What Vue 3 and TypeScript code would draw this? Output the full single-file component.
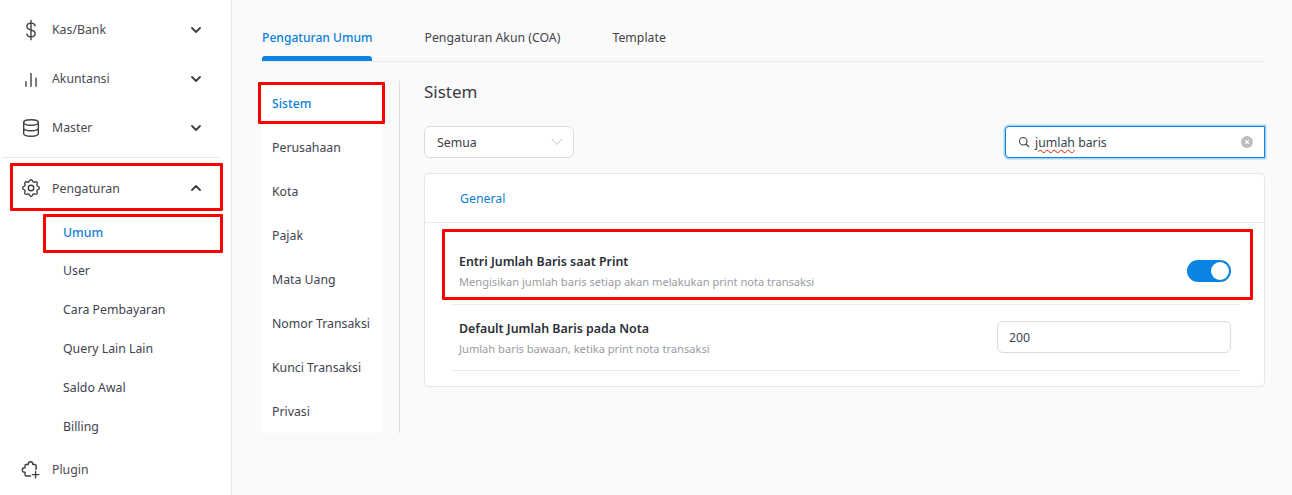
<script setup lang="ts">
const subItems: string[] = ['Umum', 'User', 'Cara Pembayaran', 'Query Lain Lain', 'Saldo Awal', 'Billing']
const menuItems: string[] = ['Sistem', 'Perusahaan', 'Kota', 'Pajak', 'Mata Uang', 'Nomor Transaksi', 'Kunci Transaksi', 'Privasi']
const tabs: string[] = ['Pengaturan Umum', 'Pengaturan Akun (COA)', 'Template']
</script>

<template>
  <div class="page">
    <aside class="sidebar">
      <div class="nav-row">
        <svg class="nav-icon" viewBox="0 0 24 24"><path d="M16.500 7.500C16 5.500 14.500 4.500 12 4.500 9.200 4.500 7.500 6 7.500 8.200 7.500 10.500 9.200 11.400 12 12c2.800 .6 4.500 1.500 4.500 3.800 0 2.200-1.700 3.700-4.500 3.700-2.500 0-4-1-4.500-3M12 1.500v21"/></svg>
        <span class="nav-label">Kas/Bank</span>
        <svg class="chev" viewBox="0 0 12 12"><path d="M2 4l4 4 4-4"/></svg>
      </div>
      <div class="nav-row">
        <svg class="nav-icon" viewBox="0 0 24 24"><path d="M6.500 20v-5M12 20V6M17.500 20v-9"/></svg>
        <span class="nav-label">Akuntansi</span>
        <svg class="chev" viewBox="0 0 12 12"><path d="M2 4l4 4 4-4"/></svg>
      </div>
      <div class="nav-row">
        <svg class="nav-icon" viewBox="0 0 24 24"><ellipse cx="12" cy="6" rx="8" ry="3"/><path d="M4 6v12c0 1.700 3.600 3 8 3s8-1.300 8-3V6M4 12c0 1.700 3.600 3 8 3s8-1.300 8-3"/></svg>
        <span class="nav-label">Master</span>
        <svg class="chev" viewBox="0 0 12 12"><path d="M2 4l4 4 4-4"/></svg>
      </div>
      <div class="nav-divider"></div>
      <div class="nav-row nav-open">
        <svg class="nav-icon" viewBox="0 0 24 24"><path d="M10.300 4.300c.4-1.800 3-1.800 3.400 0a1.700 1.700 0 0 0 2.600 1.100c1.500-.9 3.300.8 2.400 2.400a1.700 1.700 0 0 0 1 2.500c1.800.4 1.800 3 0 3.400a1.700 1.700 0 0 0-1 2.600c.9 1.500-.9 3.300-2.400 2.400a1.700 1.700 0 0 0-2.600 1c-.4 1.800-3 1.800-3.400 0a1.700 1.700 0 0 0-2.600-1c-1.500.9-3.300-.9-2.400-2.400a1.700 1.700 0 0 0-1-2.600c-1.800-.4-1.800-3 0-3.400a1.700 1.700 0 0 0 1-2.500c-.9-1.600.9-3.300 2.400-2.400a1.700 1.700 0 0 0 2.600-1.100z"/><circle cx="12" cy="12" r="3"/></svg>
        <span class="nav-label">Pengaturan</span>
        <svg class="chev" viewBox="0 0 12 12"><path d="M2 8l4-4 4 4"/></svg>
        <span class="mark mark-nav"></span>
      </div>
      <div class="sub-list">
        <div v-for="(s, i) in subItems" :key="s" class="sub-row" :class="{ active: i === 0 }">
          {{ s }}
          <span v-if="i === 0" class="mark mark-sub"></span>
        </div>
      </div>
      <div class="nav-row nav-last">
        <svg class="nav-icon" viewBox="0 0 24 24"><path d="M11.500 18.500H6.500a1 1 0 0 1-1-1v-3H5a2.500 2.500 0 0 1 0-5h.5V7a1 1 0 0 1 1-1H9v-.5a2.500 2.500 0 0 1 5 0V6h2.500a1 1 0 0 1 1 1v2.500h.5M17.500 9.500v2M13.500 17h7M17 13.500v7"/></svg>
        <span class="nav-label">Plugin</span>
      </div>
    </aside>

    <main class="main">
      <div class="tabs">
        <div v-for="(t, i) in tabs" :key="t" class="tab" :class="{ active: i === 0 }">{{ t }}</div>
      </div>

      <div class="body">
        <div class="menu">
          <div v-for="(m, i) in menuItems" :key="m" class="menu-item" :class="{ active: i === 0 }">
            {{ m }}
            <span v-if="i === 0" class="mark mark-menu"></span>
          </div>
        </div>

        <section class="content">
          <h2 class="title">Sistem</h2>
          <div class="filters">
            <div class="select">
              <span>Semua</span>
              <svg class="select-arrow" viewBox="0 0 12 8"><path d="M1 1l5 5.500L11 1"/></svg>
            </div>
            <div class="search">
              <svg class="search-icon" viewBox="0 0 24 24"><circle cx="10.500" cy="10.500" r="7.500"/><path d="M16 16l5.500 5.500"/></svg>
              <span class="search-text"><span class="typo">jumlah</span> baris</span>
              <svg class="clear" viewBox="0 0 12 12"><circle cx="6" cy="6" r="6" fill="#bdbdc0"/><path d="M4.200 4.200l3.600 3.600M7.800 4.200L4.200 7.800" stroke="#fff" stroke-width="1.200"/></svg>
            </div>
          </div>

          <div class="card">
            <div class="card-head">General</div>
            <div class="rows">
              <div class="row">
                <div class="row-text">
                  <div class="row-title">Entri Jumlah Baris saat Print</div>
                  <div class="row-desc">Mengisikan jumlah baris setiap akan melakukan print nota transaksi</div>
                </div>
                <div class="toggle"><span class="knob"></span></div>
                <span class="mark mark-row"></span>
              </div>
              <div class="row row-second">
                <div class="row-text">
                  <div class="row-title">Default Jumlah Baris pada Nota</div>
                  <div class="row-desc">Jumlah baris bawaan, ketika print nota transaksi</div>
                </div>
                <div class="field">200</div>
              </div>
            </div>
          </div>
        </section>
      </div>
    </main>
  </div>
</template>

<style>
html, body { margin: 0; background: #fafafa; overflow: hidden; }
</style>

<style scoped>
.page {
  display: flex;
  width: 1292px;
  height: 495px;
  overflow: hidden;
  background: #fafafa;
  font-family: "Noto Sans", "Open Sans", sans-serif;
  font-size: 12.300px;
  color: #3d3d42;
}
.sidebar {
  width: 231px;
  flex: none;
  background: #fff;
  border-right: 1px solid #e8e8e8;
  padding-top: 5px;
}
.nav-row {
  position: relative;
  height: 49px;
  display: flex;
  align-items: center;
  padding: 0 29px 0 20px;
  color: #4a4a4f;
}
.nav-open { height: 48px; margin-top: 6px; }
.nav-last { margin-top: -1px; }
.nav-icon {
  width: 22px;
  height: 22px;
  flex: none;
  fill: none;
  stroke: #3f3f44;
  stroke-width: 1.500;
  stroke-linecap: round;
  stroke-linejoin: round;
}
.nav-label { margin-left: 10px; flex: 1; }
.chev {
  width: 12px;
  height: 12px;
  fill: none;
  stroke: #3f3f44;
  stroke-width: 1.800;
  stroke-linecap: round;
  stroke-linejoin: round;
}
.nav-divider { height: 1px; background: #e8e8e8; margin: 5px 10px 0 2px; }
.sub-row {
  position: relative;
  height: 39px;
  line-height: 39px;
  padding-left: 63px;
  color: #3f4350;
}
.sub-row.active { color: #1480dc; font-weight: 500; line-height: 41px; }
.main {
  flex: 1;
  padding: 0 27px 0 30px;
  min-width: 0;
}
.tabs {
  display: flex;
  gap: 52px;
  height: 61px;
  border-bottom: 1px solid #ececec;
}
.tab {
  height: 57px;
  padding-top: 29px;
  box-sizing: border-box;
  line-height: 18px;
  color: #44444a;
}
.tab.active {
  height: 61px;
  color: #0a7fdc;
  font-size: 12.100px;
  font-weight: 500;
  position: relative;
}
.tab.active::after {
  content: "";
  position: absolute;
  left: 0;
  right: 0;
  bottom: 0;
  height: 5px;
  background: #0984e3;
  border-radius: 3px 3px 0 0;
}
.body {
  display: flex;
  margin-top: 19px;
}
.menu {
  width: 120px;
  flex: none;
  background: #fff;
  margin-right: 17px;
}
.menu-item {
  position: relative;
  height: 44px;
  line-height: 46px;
  padding-left: 10px;
  color: #3f4350;
}
.menu-item.active { color: #0a7fdc; font-weight: 500; }
.content {
  flex: 1;
  min-width: 0;
  height: 352px;
  border-left: 1px solid #dedede;
  padding-left: 24px;
}
.title {
  margin: 0;
  font-size: 17px;
  font-weight: 400;
  line-height: 22px;
  color: #3c3c41;
}
.filters {
  display: flex;
  justify-content: space-between;
  margin-top: 23px;
}
.select {
  width: 150px;
  height: 32px;
  box-sizing: border-box;
  border: 1px solid #dcdcdc;
  border-radius: 6px;
  background: #fff;
  display: flex;
  align-items: center;
  justify-content: space-between;
  padding: 0 10px 0 12px;
}
.select-arrow { width: 12px; height: 8px; fill: none; stroke: #c4c4c4; stroke-width: 1; }
.search {
  width: 260px;
  height: 32px;
  box-sizing: border-box;
  border: 1px solid #0984e3;
  border-radius: 4px 0 0 4px;
  box-shadow: 0 0 0 1.500px #a9d3f5;
  background: #fff;
  display: flex;
  align-items: center;
  padding: 0 11px 0 12px;
}
.search-icon { width: 12px; height: 12px; flex: none; fill: none; stroke: #3f3f44; stroke-width: 2.200; stroke-linecap: round; }
.search-text { margin-left: 5px; flex: 1; color: #3a3f50; }
.typo { text-decoration: underline wavy #d92000 1.300px; text-underline-offset: 2px; }
.clear { width: 12px; height: 12px; flex: none; fill: none; }
.card {
  margin-top: 15px;
  height: 214px;
  box-sizing: border-box;
  border: 1px solid #e6e6e6;
  border-radius: 4px;
  background: #fff;
}
.card-head {
  height: 48px;
  line-height: 50px;
  padding-left: 35px;
  color: #0a7fdc;
  border-bottom: 1px solid #ececec;
}
.rows { padding: 0 24px 0 25px; }
.row {
  position: relative;
  height: 82px;
  box-sizing: border-box;
  border-bottom: 1px solid #ececec;
  display: flex;
  align-items: center;
  justify-content: space-between;
  padding: 14px 9px 0 9px;
}
.row-second { height: 66px; padding: 0 9px 1px; }
.row-text { margin-top: 3px; }
.row-title { font-weight: 600; font-size: 12.400px; line-height: 18px; color: #2b2f38; }
.row-desc { font-size: 11.100px; line-height: 18px; margin-top: 2px; color: #9a9ca3; }
.toggle {
  width: 44px;
  height: 22px;
  border-radius: 11px;
  background: #0984e3;
  position: relative;
}
.knob {
  position: absolute;
  right: 2px;
  top: 2px;
  width: 18px;
  height: 18px;
  border-radius: 50%;
  background: #fff;
}
.field {
  width: 234px;
  height: 32px;
  box-sizing: border-box;
  border: 1px solid #dcdcdc;
  border-radius: 6px;
  padding-left: 11px;
  line-height: 32px;
  color: #3a3f50;
}
.mark {
  position: absolute;
  border: 3px solid #ff0000;
  box-sizing: border-box;
  pointer-events: none;
  border-radius: 1px;
}
.mark-nav { left: 10px; width: 213px; top: -1px; height: 48px; }
.mark-sub { left: 43px; width: 180px; top: 2px; height: 39px; }
.mark-menu { left: -4px; width: 127px; top: 1px; height: 42px; }
.mark-row { left: -8px; width: 811px; top: 6px; height: 71px; }
</style>
